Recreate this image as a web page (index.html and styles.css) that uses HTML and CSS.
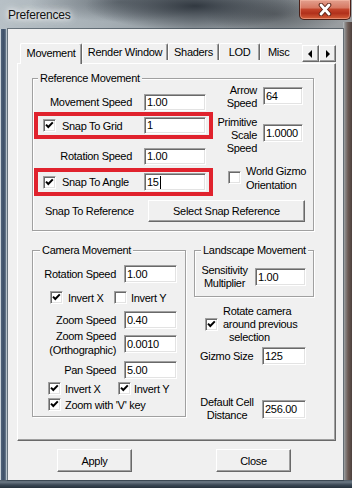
FILE: index.html
```html
<!DOCTYPE html>
<html>
<head>
<meta charset="utf-8">
<title>Preferences</title>
<link rel="stylesheet" href="styles.css">
</head>
<body>
<div class="frame">
  <div class="titlebar">
    <span class="title">Preferences</span>
    <div class="close">
      <svg width="16" height="13" viewBox="0 0 16 13">
        <path d="M4 2 L12 11 M12 2 L4 11" stroke="#5a2418" stroke-width="4.6" stroke-linecap="round" fill="none"/>
        <path d="M4 2 L12 11 M12 2 L4 11" stroke="#fff" stroke-width="2.8" stroke-linecap="round" fill="none"/>
      </svg>
    </div>
  </div>
  <div class="client">
    <div class="tabstrip">
      <div class="tabs">
        <div class="tab sel w-move">Movement</div>
        <div class="tab w-render">Render Window</div>
        <div class="tab w-shaders">Shaders</div>
        <div class="tab w-lod">LOD</div>
        <div class="tab w-misc">Misc</div>
      </div>
      <div class="arrows">
        <div class="arr"><svg width="5" height="8" viewBox="0 0 5 8"><path d="M4 0 L0 4 L4 8 Z" fill="#000"/></svg></div>
        <div class="arr"><svg width="5" height="8" viewBox="0 0 5 8"><path d="M1 0 L5 4 L1 8 Z" fill="#000"/></svg></div>
      </div>
    </div>
    <div class="panel">
      <div class="group g-ref">
        <div class="legend">Reference Movement</div>
        <div class="ref-top">
          <div class="ref-left">
            <div class="row row-a">
              <span class="lbl-ref">Movement Speed</span>
              <div class="edit e-ref">1.00</div>
            </div>
            <div class="hl hl1">
              <div class="cb"><svg width="11" height="11" viewBox="0 0 11 11"><path d="M2 4.6 L4.3 7 L8.8 2.4" stroke="#000" stroke-width="2" fill="none"/></svg></div>
              <span class="hl-text">Snap To Grid</span>
              <div class="edit e-ref">1</div>
            </div>
            <div class="row row-c">
              <span class="lbl-ref">Rotation Speed</span>
              <div class="edit e-ref">1.00</div>
            </div>
            <div class="hl hl2">
              <div class="cb"><svg width="11" height="11" viewBox="0 0 11 11"><path d="M2 4.6 L4.3 7 L8.8 2.4" stroke="#000" stroke-width="2" fill="none"/></svg></div>
              <span class="hl-text">Snap To Angle</span>
              <div class="edit e-ref e-tall">15<span class="caret"></span></div>
            </div>
          </div>
          <div class="ref-right">
            <div class="rrow rrow-arrow">
              <span class="lbl-rr">Arrow<br>Speed</span>
              <div class="edit e-rr e-arrow">64</div>
            </div>
            <div class="rrow rrow-prim">
              <span class="lbl-rr">Primitive<br>Scale<br>Speed</span>
              <div class="edit e-rr e-prim">1.0000</div>
            </div>
            <div class="rrow rrow-world">
              <div class="cb cb-world"></div>
              <span class="world-text">World Gizmo<br>Orientation</span>
            </div>
          </div>
        </div>
        <div class="snapref">
          <span class="lbl-snapref">Snap To Reference</span>
          <div class="btn btn-snap">Select Snap Reference</div>
        </div>
      </div>

      <div class="lower">
        <div class="group g-cam">
          <div class="legend legend-cam">Camera Movement</div>
          <div class="crow crow-rot">
            <span class="lbl-cam">Rotation Speed</span>
            <div class="edit e-cam">1.00</div>
          </div>
          <div class="chkrow chk1">
            <div class="cb"><svg width="11" height="11" viewBox="0 0 11 11"><path d="M2 4.6 L4.3 7 L8.8 2.4" stroke="#000" stroke-width="2" fill="none"/></svg></div>
            <span class="chk1-x">Invert X</span>
            <div class="cb"></div>
            <span class="chk1-y">Invert Y</span>
          </div>
          <div class="crow crow-zoom">
            <span class="lbl-cam">Zoom Speed</span>
            <div class="edit e-cam">0.40</div>
          </div>
          <div class="crow crow-ortho">
            <span class="lbl-cam lbl-two">Zoom Speed<br>(Orthographic)</span>
            <div class="edit e-cam e-ortho">0.0010</div>
          </div>
          <div class="crow crow-pan">
            <span class="lbl-cam">Pan Speed</span>
            <div class="edit e-cam">5.00</div>
          </div>
          <div class="chkrow chk2">
            <div class="cb cb-l"><svg width="11" height="11" viewBox="0 0 11 11"><path d="M2 4.6 L4.3 7 L8.8 2.4" stroke="#000" stroke-width="2" fill="none"/></svg></div>
            <span class="chk2-x">Invert X</span>
            <div class="cb"><svg width="11" height="11" viewBox="0 0 11 11"><path d="M2 4.6 L4.3 7 L8.8 2.4" stroke="#000" stroke-width="2" fill="none"/></svg></div>
            <span class="chk2-y">Invert Y</span>
          </div>
          <div class="chkrow chk3">
            <div class="cb cb-l"><svg width="11" height="11" viewBox="0 0 11 11"><path d="M2 4.6 L4.3 7 L8.8 2.4" stroke="#000" stroke-width="2" fill="none"/></svg></div>
            <span class="chk3-t">Zoom with 'V' key</span>
          </div>
        </div>

        <div class="rcol">
          <div class="group g-land">
            <div class="legend legend-land">Landscape Movement</div>
            <div class="lrow">
              <span class="lbl-sens">Sensitivity<br>Multiplier</span>
              <div class="edit e-sens">1.00</div>
            </div>
          </div>
          <div class="rot-row">
            <div class="cb"><svg width="11" height="11" viewBox="0 0 11 11"><path d="M2 4.6 L4.3 7 L8.8 2.4" stroke="#000" stroke-width="2" fill="none"/></svg></div>
            <span class="rot-text">Rotate camera<br>around previous<br><span class="indent">selection</span></span>
          </div>
          <div class="giz-row">
            <span class="lbl-giz">Gizmo Size</span>
            <div class="edit e-giz">125</div>
          </div>
          <div class="cell-row">
            <span class="lbl-cell">Default Cell<br>Distance</span>
            <div class="edit e-cell">256.00</div>
          </div>
        </div>
      </div>
    </div>
    <div class="btns">
      <div class="btn btn-main">Apply</div>
      <div class="btn btn-main btn-close">Close</div>
    </div>
  </div>
</div>
</body>
</html>
```
FILE: styles.css
```css
* { box-sizing: border-box; }
html, body { margin: 0; padding: 0; }
body {
  width: 352px;
  height: 488px;
  overflow: hidden;
  font-family: "Liberation Sans", Arial, sans-serif;
  font-size: 11px;
  letter-spacing: -0.3px;
  color: #000;
}

/* ---------- window frame ---------- */
.frame {
  width: 352px;
  height: 488px;
  display: flex;
  flex-direction: column;
  background:
    linear-gradient(90deg, #c9d1d7 0, #c9d1d7 1px, #50627a 1px, #3d4f66 4px, #6e7f92 6px, #b7c2ca 6px) 0 29px / 8px 451px no-repeat,
    linear-gradient(90deg, #b9bfc2 0, #8c8b8b 2px, #6d5c56 5px, #4c403d 9px) 343px 22px / 9px 458px no-repeat,
    linear-gradient(180deg, #4b5763 0, #6b7884 2px, #3a4754 5px, #25313c 8px) 0 480px / 352px 8px no-repeat,
    radial-gradient(ellipse 110px 24px at 195px 6px, rgba(45,52,60,0.95), rgba(45,52,60,0)),
    radial-gradient(ellipse 90px 20px at 120px 2px, rgba(70,78,86,0.6), rgba(70,78,86,0)),
    radial-gradient(ellipse 70px 22px at 275px 14px, rgba(60,64,68,0.6), rgba(60,64,68,0)),
    linear-gradient(90deg, #b7c0c6 0%, #a6afb5 30%, #8b9399 55%, #8e959a 80%, #9b9fa2 100%);
}
.titlebar {
  height: 29px;
  display: flex;
  align-items: flex-start;
}
.title {
  margin: 8px 0 0 8px;
  font-size: 12px;
  line-height: 14px;
  letter-spacing: -0.2px;
  color: #111;
  text-shadow: 0 0 5px #fff, 0 0 9px rgba(255,255,255,0.9), 0 0 12px rgba(255,255,255,0.7);
}
.close {
  margin-left: auto;
  margin-right: 1px;
  width: 52px;
  height: 20px;
  border: 1px solid #4a2018;
  border-top: none;
  border-radius: 0 0 5px 5px;
  background: linear-gradient(180deg, #e3a08e 0%, #d77a64 40%, #c2432a 50%, #b1301b 70%, #d4603a 100%);
  box-shadow: inset 0 0 0 1px rgba(255,200,180,0.45);
  display: flex;
  align-items: center;
  justify-content: center;
}

.client {
  margin-left: 8px;
  width: 335px;
  height: 451px;
  background: #f0f0f0;
  display: flex;
  flex-direction: column;
  box-shadow: 0 0 0 1px rgba(40,52,64,0.55);
}

/* ---------- tabs ---------- */
.tabstrip {
  display: flex;
  margin: 14px 0 0 12px;
  width: 316px;
  height: 20px;
  align-items: flex-start;
}
.tabs {
  display: flex;
  width: 282px;
  height: 21px;
  overflow: hidden;
  align-items: flex-end;
  position: relative;
  z-index: 1;
}
.tab {
  flex: none;
  height: 17px;
  margin-bottom: 4px;
  border-left: 1px solid #fff;
  border-top: 1px solid #fff;
  border-right: 1px solid #696969;
  box-shadow: inset -1px 0 0 #a0a0a0;
  border-radius: 2px 2px 0 0;
  background: #f0f0f0;
  display: flex;
  align-items: center;
  justify-content: center;
  line-height: 14px;
}
.tab.sel {
  height: 21px;
  margin-bottom: 0;
  padding-bottom: 2px;
}
.w-move { width: 62px; }
.w-render { width: 86px; }
.w-shaders { width: 51px; }
.w-lod { width: 41px; }
.w-misc { width: 50px; justify-content: flex-start; padding-left: 7px; }
.arrows {
  display: flex;
  margin-top: 2px;
}
.arr {
  width: 17px;
  height: 17px;
  background: #f0f0f0;
  border: 1px solid;
  border-color: #fff #696969 #696969 #fff;
  box-shadow: inset -1px -1px 0 #a0a0a0;
  display: flex;
  align-items: center;
  justify-content: center;
}

/* ---------- panel ---------- */
.panel {
  margin-left: 9px;
  width: 319px;
  height: 378px;
  border: 1px solid;
  border-color: #fff #696969 #696969 #fff;
  box-shadow: inset -1px -1px 0 #a0a0a0;
}

.group {
  border: 1px solid #a0a0a0;
  box-shadow: inset 1px 1px 0 #fff, 1px 1px 0 #fff;
}
.legend {
  width: max-content;
  margin: -7px 0 0 5px;
  padding: 0 2px;
  line-height: 13px;
  background: #f0f0f0;
}
.legend-cam { margin-left: 7px; }
.legend-land { margin-left: 6px; }

.edit {
  flex: none;
  background: #fff;
  border: 1px solid;
  border-color: #a0a0a0 #fff #fff #a0a0a0;
  box-shadow: inset 1px 1px 0 #696969, inset -1px -1px 0 #e3e3e3;
  padding-left: 2px;
  display: flex;
  align-items: center;
  line-height: 13px;
}
.caret {
  display: inline-block;
  width: 1px;
  height: 13px;
  background: #000;
  margin-left: 1px;
}
.cb {
  flex: none;
  width: 13px;
  height: 13px;
  background: #fff;
  border: 1px solid;
  border-color: #a0a0a0 #fff #fff #a0a0a0;
  box-shadow: inset 1px 1px 0 #696969, inset -1px -1px 0 #e3e3e3;
}
.cb svg { display: block; }

.btn {
  flex: none;
  background: #f0f0f0;
  border: 1px solid;
  border-color: #fff #696969 #696969 #fff;
  box-shadow: inset -1px -1px 0 #a0a0a0;
  display: flex;
  align-items: center;
  justify-content: center;
}

/* ---------- reference movement ---------- */
.g-ref {
  margin: 14px 0 0 14px;
  width: 282px;
  height: 153px;
}
.ref-top { display: flex; }
.ref-left {
  width: 181px;
  display: flex;
  flex-direction: column;
}
.row {
  display: flex;
  align-items: center;
  height: 17px;
}
.row-a { margin-top: 9px; }
.row-c { margin-top: 9px; }
.lbl-ref {
  width: 99px;
  text-align: right;
  line-height: 17px;
}
.e-ref {
  width: 62px;
  height: 17px;
  margin-left: 12px;
}
.hl {
  margin-left: 1px;
  width: 179px;
  border: 4px solid #e0222d;
  display: flex;
  align-items: center;
}
.hl .cb { margin-left: 5px; }
.hl .e-ref { margin-left: 0; }
.hl1 { margin-top: 1px; height: 27px; }
.hl2 { margin-top: 3px; height: 28px; }
.e-tall { height: 18px; }
.hl-text {
  width: 82px;
  margin-left: 6px;
}

.ref-right {
  width: 98px;
  display: flex;
  flex-direction: column;
}
.rrow {
  display: flex;
  align-items: flex-start;
}
.rrow-arrow { margin-top: -1px; }
.rrow-prim { margin-top: 6px; }
.rrow-world { margin-top: 9px; }
.lbl-rr {
  width: 43px;
  text-align: right;
  line-height: 13px;
}
.e-rr {
  width: 40px;
  height: 18px;
  margin-left: 6px;
}
.e-arrow { margin-top: 3px; }
.e-prim { margin-top: 8px; }
.cb-world {
  margin: 7px 0 0 14px;
}
.world-text {
  margin-left: 5px;
  line-height: 14px;
}

.snapref {
  display: flex;
  align-items: center;
  margin-top: 4px;
  height: 22px;
}
.lbl-snapref {
  width: 103px;
  margin-left: 12px;
}
.btn-snap {
  width: 157px;
  height: 22px;
}

/* ---------- lower section ---------- */
.lower {
  display: flex;
  margin: 19px 0 0 14px;
}
.g-cam {
  width: 154px;
  height: 167px;
}
.crow {
  display: flex;
  align-items: center;
  height: 18px;
}
.crow-rot { margin-top: 8px; }
.crow-zoom { margin-top: 7px; }
.crow-ortho {
  height: 28px;
  align-items: flex-start;
}
.crow-pan { margin-top: 4px; }
.lbl-cam {
  width: 83px;
  text-align: right;
  line-height: 18px;
}
.lbl-two { line-height: 14px; }
.e-cam {
  width: 53px;
  height: 18px;
  margin-left: 8px;
}
.e-ortho { margin-top: 6px; }

.chkrow {
  display: flex;
  align-items: center;
  height: 13px;
}
.chk1 { margin-top: 8px; }
.chk1 .cb:first-child { margin-left: 17px; }
.chk1-x { margin-left: 5px; width: 46px; }
.chk1-y { margin-left: 4px; }
.chk2 { margin-top: 3px; }
.chk3 { margin-top: 3px; }
.cb-l { margin-left: 15px; }
.chk2-x { margin-left: 4px; width: 53px; }
.chk2-y { margin-left: 3px; }
.chk3-t { margin-left: 4px; }

.rcol {
  margin-left: 8px;
  width: 120px;
  display: flex;
  flex-direction: column;
}
.g-land {
  width: 120px;
  height: 47px;
}
.lrow {
  display: flex;
  align-items: center;
  margin-top: 7px;
}
.lbl-sens {
  width: 59px;
  text-align: center;
  line-height: 13px;
}
.e-sens {
  width: 51px;
  height: 18px;
  margin-left: 1px;
}

.rot-row {
  display: flex;
  align-items: center;
  margin-top: 8px;
}
.rot-row .cb { margin-left: 11px; }
.rot-text {
  margin-left: 5px;
  line-height: 13px;
}
.indent { padding-left: 6px; }

.giz-row {
  display: flex;
  align-items: center;
  margin-top: 3px;
  height: 18px;
}
.lbl-giz {
  width: 62px;
  margin-left: 6px;
}
.e-giz {
  width: 44px;
  height: 18px;
}

.cell-row {
  display: flex;
  align-items: center;
  margin-top: 31px;
}
.lbl-cell {
  width: 54px;
  margin-left: 6px;
  text-align: center;
  line-height: 13px;
}
.e-cell {
  width: 44px;
  height: 19px;
  margin-left: 8px;
}

/* ---------- bottom buttons ---------- */
.btns {
  display: flex;
  margin: 8px 0 0 49px;
}
.btn-main {
  width: 75px;
  height: 23px;
}
.btn-close { margin-left: 84px; }
```
